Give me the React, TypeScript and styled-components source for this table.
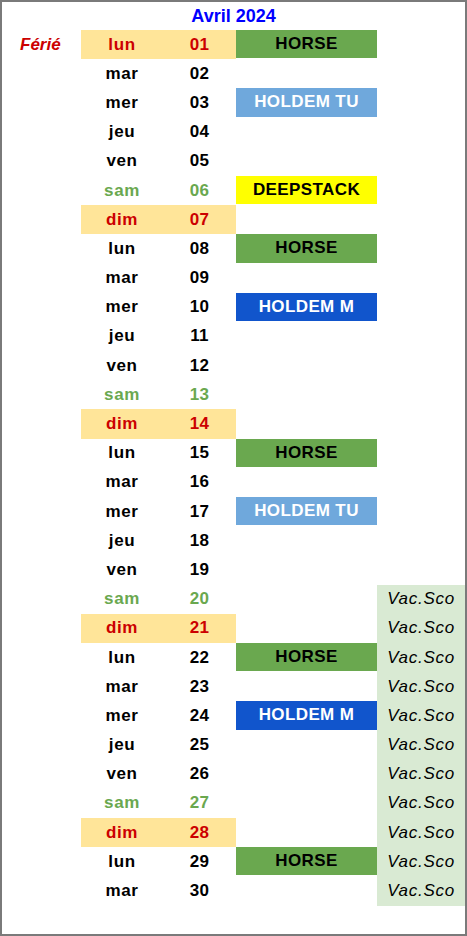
import React from "react"
import styled, { createGlobalStyle } from "styled-components"

type Kind = "week" | "sam" | "dim"
type EventType = "horse" | "tu" | "m" | "deep"

interface Day {
    name: string,
    num: number,
    event?: EventType,
    vac?: boolean,
    ferie?: boolean
}

const GlobalStyle = createGlobalStyle`
    html, body {
        margin: 0;
        padding: 0;
        background: #ffffff;
    }
`

const Sheet = styled.div`
    width: 467px;
    height: 936px;
    box-sizing: border-box;
    border: 2px solid #7a7a7a;
    background: #ffffff;
    font-family: "Liberation Sans", Arial, sans-serif;
    display: flex;
    flex-direction: column;
`

const Title = styled.div`
    height: 27px;
    display: flex;
    align-items: center;
    justify-content: center;
    padding-top: 1px;
    font-size: 18px;
    font-weight: bold;
    color: #0000ff;
`

const Row = styled.div`
    display: grid;
    grid-template-columns: 79px 82px 73px 141px 88px;
    height: 29.2px;
`

const Cell = styled.div`
    display: flex;
    align-items: center;
    justify-content: center;
    font-size: 17px;
    white-space: nowrap;
`

const FerieLabel = styled(Cell)`
    color: #cc0000;
    font-weight: bold;
    font-style: italic;
    justify-content: flex-start;
    padding-left: 18px;
`

const DayCell = styled(Cell)<{ $kind: Kind }>`
    font-weight: bold;
    letter-spacing: 0.6px;
    color: ${p => p.$kind === "sam" ? "#6aa84f" : p.$kind === "dim" ? "#cc0000" : "#000000"};
    background: ${p => p.$kind === "dim" ? "#ffe599" : "transparent"};
`

const NumCell = styled(DayCell)`
    letter-spacing: 0.3px;
`

const eventColors: Record<EventType, { bg: string, fg: string, label: string }> = {
    horse: { bg: "#6aa84f", fg: "#000000", label: "HORSE" },
    tu: { bg: "#6fa8dc", fg: "#ffffff", label: "HOLDEM TU" },
    m: { bg: "#1155cc", fg: "#ffffff", label: "HOLDEM M" },
    deep: { bg: "#ffff00", fg: "#000000", label: "DEEPSTACK" },
}

const EventCell = styled(Cell)<{ $type?: EventType }>`
    font-weight: bold;
    letter-spacing: 0.4px;
    background: ${p => p.$type ? eventColors[p.$type].bg : "transparent"};
    color: ${p => p.$type ? eventColors[p.$type].fg : "#000000"};
    border-bottom: 1px solid ${p => p.$type ? "#ffffff" : "transparent"};
    box-sizing: border-box;
`

const VacCell = styled(Cell)<{ $on?: boolean }>`
    background: ${p => p.$on ? "#d9ead3" : "transparent"};
    font-style: italic;
    letter-spacing: 0.7px;
    color: #000000;
`

const names = ["lun", "mar", "mer", "jeu", "ven", "sam", "dim"]

const eventsByDay: Record<number, EventType> = {
    1: "horse", 3: "tu", 6: "deep", 8: "horse", 10: "m",
    15: "horse", 17: "tu", 22: "horse", 24: "m", 29: "horse",
}

const days: Day[] = Array.from({ length: 30 }, (_, i) => ({
    name: names[i % 7],
    num: i + 1,
    event: eventsByDay[i + 1],
    vac: i + 1 >= 20,
    ferie: i === 0,
}))

function kindOf(day: Day): Kind {
    if (day.ferie || day.name === "dim") return "dim"
    if (day.name === "sam") return "sam"
    return "week"
}

function App() {
    return (
        <>
            <GlobalStyle />
            <Sheet>
                <Title>Avril 2024</Title>
                {days.map(day => {
                    const kind = kindOf(day)
                    return (
                        <Row key={day.num}>
                            {day.ferie ? <FerieLabel>Férié</FerieLabel> : <Cell />}
                            <DayCell $kind={kind}>{day.name}</DayCell>
                            <NumCell $kind={kind}>{String(day.num).padStart(2, "0")}</NumCell>
                            <EventCell $type={day.event}>{day.event ? eventColors[day.event].label : ""}</EventCell>
                            <VacCell $on={day.vac}>{day.vac ? "Vac.Sco" : ""}</VacCell>
                        </Row>
                    )
                })}
            </Sheet>
        </>
    )
}

export default App
